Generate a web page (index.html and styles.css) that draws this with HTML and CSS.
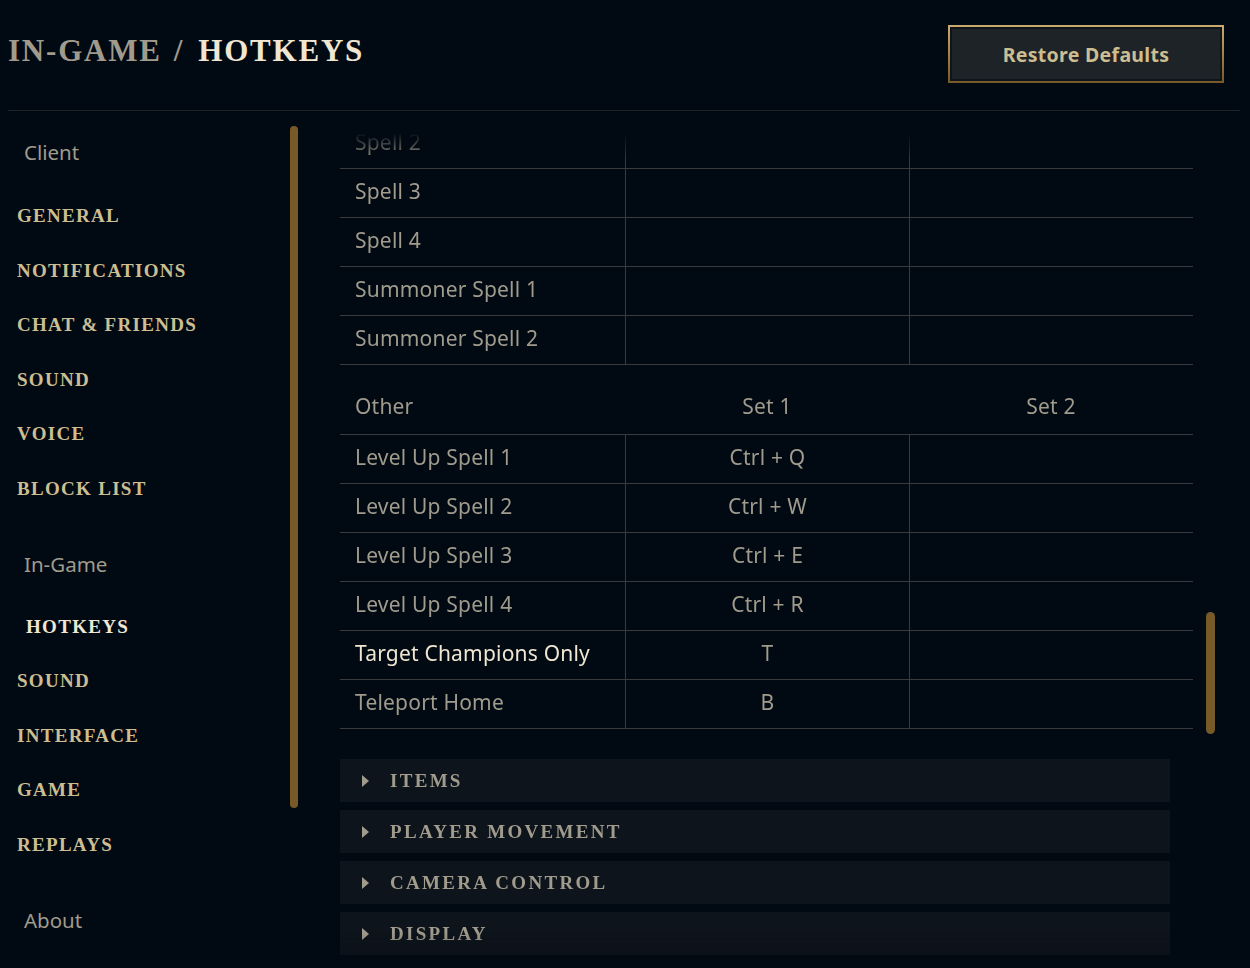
FILE: index.html
```html
<!DOCTYPE html>
<html>
<head>
<meta charset="utf-8">
<link rel="stylesheet" href="styles.css">
</head>
<body>
<div class="app">
  <header class="header">
    <h1 class="title"><span class="crumb">IN-GAME</span><span class="sep">/</span><span class="current">HOTKEYS</span></h1>
    <button class="restore">Restore Defaults</button>
  </header>
  <div class="main">
    <nav class="sidebar">
      <div class="group-label first">Client</div>
      <a class="nav-item">GENERAL</a>
      <a class="nav-item">NOTIFICATIONS</a>
      <a class="nav-item">CHAT &amp; FRIENDS</a>
      <a class="nav-item">SOUND</a>
      <a class="nav-item">VOICE</a>
      <a class="nav-item">BLOCK LIST</a>
      <div class="group-label mid">In-Game</div>
      <a class="nav-item active">HOTKEYS</a>
      <a class="nav-item">SOUND</a>
      <a class="nav-item">INTERFACE</a>
      <a class="nav-item">GAME</a>
      <a class="nav-item">REPLAYS</a>
      <div class="group-label last">About</div>
    </nav>
    <div class="side-scroll"><div class="side-thumb"></div></div>
    <section class="content">
      <div class="scroll-area">
        <div class="table">
          <div class="row"><div class="cell name">Spell 2</div><div class="cell key"></div><div class="cell key"></div></div>
          <div class="row"><div class="cell name">Spell 3</div><div class="cell key"></div><div class="cell key"></div></div>
          <div class="row"><div class="cell name">Spell 4</div><div class="cell key"></div><div class="cell key"></div></div>
          <div class="row"><div class="cell name">Summoner Spell 1</div><div class="cell key"></div><div class="cell key"></div></div>
          <div class="row"><div class="cell name">Summoner Spell 2</div><div class="cell key"></div><div class="cell key"></div></div>
          <div class="row head"><div class="cell name">Other</div><div class="cell key">Set 1</div><div class="cell key">Set 2</div></div>
          <div class="row"><div class="cell name">Level Up Spell 1</div><div class="cell key">Ctrl + Q</div><div class="cell key"></div></div>
          <div class="row"><div class="cell name">Level Up Spell 2</div><div class="cell key">Ctrl + W</div><div class="cell key"></div></div>
          <div class="row"><div class="cell name">Level Up Spell 3</div><div class="cell key">Ctrl + E</div><div class="cell key"></div></div>
          <div class="row"><div class="cell name">Level Up Spell 4</div><div class="cell key">Ctrl + R</div><div class="cell key"></div></div>
          <div class="row hover"><div class="cell name">Target Champions Only</div><div class="cell key">T</div><div class="cell key"></div></div>
          <div class="row"><div class="cell name">Teleport Home</div><div class="cell key">B</div><div class="cell key"></div></div>
        </div>
        <div class="sections">
          <div class="section"><span class="caret"></span><span class="section-title">ITEMS</span></div>
          <div class="section"><span class="caret"></span><span class="section-title">PLAYER MOVEMENT</span></div>
          <div class="section"><span class="caret"></span><span class="section-title">CAMERA CONTROL</span></div>
          <div class="section"><span class="caret"></span><span class="section-title">DISPLAY</span></div>
        </div>
      </div>
      <div class="content-scroll"><div class="content-thumb"></div></div>
    </section>
  </div>
</div>
</body>
</html>
```
FILE: styles.css
```css
html, body {
  margin: 0;
  padding: 0;
  background: #010a13;
  width: 1250px;
  height: 968px;
  overflow: hidden;
}
.app {
  width: 1250px;
  height: 968px;
  font-family: "Noto Sans", "Open Sans", sans-serif;
}
.header {
  height: 111px;
  margin: 0 10px 0 8px;
  border-bottom: 1px solid #1e2328;
  display: flex;
  align-items: flex-start;
  justify-content: space-between;
  box-sizing: border-box;
}
.title {
  margin: 0;
  padding-top: 31px;
  font-family: "Liberation Serif", serif;
  font-weight: bold;
  font-size: 31px;
  line-height: 40px;
  letter-spacing: 1.8px;
}
.crumb { color: #a09b8c; }
.sep { color: #a09b8c; margin: 0 14px 0 12px; }
.current { color: #f0e6d2; }
.restore {
  margin-top: 25px;
  margin-right: 16px;
  width: 276px;
  height: 58px;
  background: #1e2328;
  border: 2px solid #b08d4e;
  border-image: linear-gradient(#c8aa6e, #785a28) 1;
  box-shadow: inset 0 0 0 2px #10151b;
  color: #cdbe91;
  font-family: "Noto Sans", "Open Sans", sans-serif;
  font-weight: bold;
  font-size: 19.5px;
  letter-spacing: 0.3px;
  padding: 0;
}
.main {
  display: flex;
  align-items: flex-start;
  height: 857px;
}
.sidebar {
  width: 290px;
  display: flex;
  flex-direction: column;
  padding-left: 17px;
  box-sizing: border-box;
}
.group-label {
  height: 40px;
  line-height: 40px;
  padding-left: 7px;
  color: #a09b8c;
  font-size: 20.5px;
}
.group-label.first { margin-top: 21px; margin-bottom: 17px; }
.group-label.mid { margin-top: 27px; margin-bottom: 16px; }
.group-label.last { margin-top: 27px; }
.nav-item {
  height: 54.6px;
  line-height: 54.6px;
  color: #cdbe91;
  font-family: "Liberation Serif", serif;
  font-weight: bold;
  font-size: 19px;
  letter-spacing: 1.3px;
}
.nav-item.active {
  color: #f0e6d2;
  padding-left: 9px;
}
.side-scroll {
  width: 8px;
  margin-top: 15px;
  height: 682px;
}
.side-thumb {
  height: 100%;
  background: #785a28;
  border-radius: 4px;
}
.content {
  margin-left: 42px;
  display: flex;
  align-items: flex-start;
  height: 857px;
}
.scroll-area {
  width: 853px;
  height: 857px;
  overflow: hidden;
  -webkit-mask-image: linear-gradient(to bottom, transparent 0px, transparent 22px, #000 50px, #000 820px, rgba(0,0,0,0.6) 857px);
  mask-image: linear-gradient(to bottom, transparent 0px, transparent 22px, #000 50px, #000 820px, rgba(0,0,0,0.6) 857px);
}
.table {
  margin-top: 9px;
  display: flex;
  flex-direction: column;
}
.row {
  display: grid;
  grid-template-columns: 285px 284px 284px;
  height: 49px;
  border-bottom: 1px solid #3a3b3e;
  box-sizing: border-box;
  color: #a09b8c;
  font-size: 21px;
  letter-spacing: 0.2px;
}
.cell {
  display: flex;
  align-items: center;
  padding-bottom: 4px;
}
.cell.name { padding-left: 15px; }
.cell.key {
  justify-content: center;
  border-left: 1px solid #3a3b3e;
}
.row.head {
  height: 70px;
}
.row.head .cell {
  align-items: flex-end;
  padding-bottom: 14px;
}
.row.head .cell.key { border-left: none; }
.row.hover .cell.name { color: #f0e6d2; }
.sections {
  margin-top: 30px;
  width: 830px;
  display: flex;
  flex-direction: column;
  gap: 8px;
}
.section {
  height: 43px;
  background: #0e141b;
  display: flex;
  align-items: center;
}
.caret {
  width: 0;
  height: 0;
  border-top: 6px solid transparent;
  border-bottom: 6px solid transparent;
  border-left: 7px solid #a09b8c;
  margin-left: 22px;
  margin-right: 21px;
}
.section-title {
  color: #a09b8c;
  font-family: "Liberation Serif", serif;
  font-weight: bold;
  font-size: 19px;
  letter-spacing: 2.3px;
}
.content-scroll {
  margin-left: 13px;
  margin-top: 501px;
  width: 9px;
  height: 122px;
}
.content-thumb {
  height: 100%;
  background: #785a28;
  border-radius: 4.5px;
}
```
